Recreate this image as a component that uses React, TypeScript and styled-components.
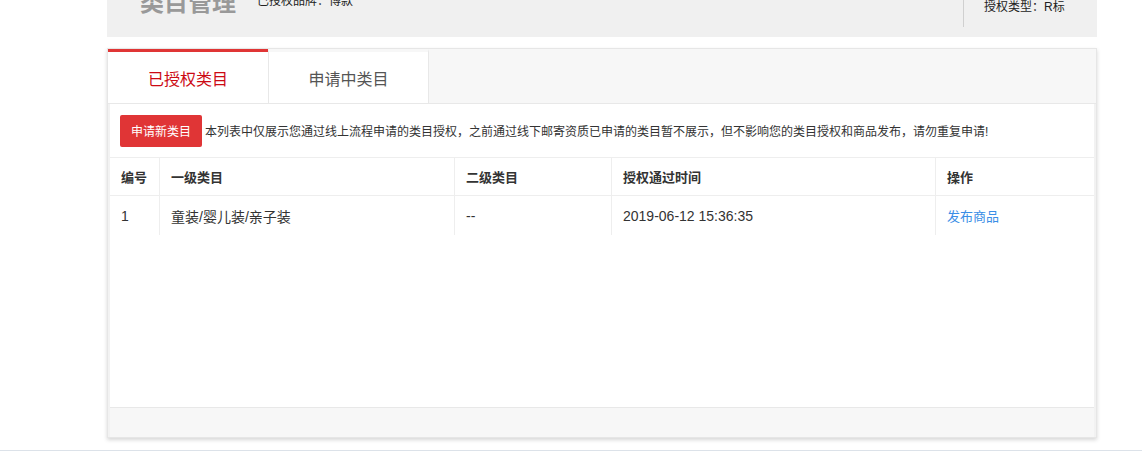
import React from 'react';
import styled, { createGlobalStyle } from 'styled-components';

const GlobalStyle = createGlobalStyle`
  html, body {
    margin: 0;
    padding: 0;
    background: #fff;
    font-family: "Liberation Sans", Arial, "Noto Sans CJK SC", sans-serif;
    color: #333;
  }
`;

const Page = styled.div`
  height: 450px;
  border-bottom: 1px solid #dce2e9;
  overflow: hidden;
`;

const Main = styled.div`
  width: 990px;
  margin-left: 107px;
`;

const Header = styled.div`
  display: flex;
  height: 80px;
  margin-top: -43px;
  padding-left: 33px;
  background: #f0f0f0;
`;

const Title = styled.h1`
  margin: 34px 0 0;
  font-size: 24px;
  line-height: 24px;
  font-weight: bold;
  color: #999;
`;

const BrandInfo = styled.div`
  margin: 38px 0 0 21px;
  font-size: 12px;
  line-height: 12px;
  color: #222;
`;

const TypeBox = styled.div`
  margin-left: auto;
  width: 134px;
  height: 70px;
  border-left: 1px solid #d0d0d0;
  padding-left: 20px;
  box-sizing: border-box;
  font-size: 12px;
  line-height: 12px;
  color: #222;
  padding-top: 44px;
`;

const Card = styled.div`
  margin-top: 11px;
  border: 1px solid #e6e6e6;
  background: #f2f2f2;
  box-shadow: 0 2px 4px rgba(0, 0, 0, 0.16);
`;

const TabBar = styled.div`
  display: flex;
  height: 54px;
  background: #f7f7f7;
  border-bottom: 1px solid #e8e8e8;
`;

const Tab = styled.div<{ $active?: boolean }>`
  width: ${(p) => (p.$active ? '160px' : '161px')};
  display: flex;
  align-items: center;
  justify-content: center;
  background: #fff;
  box-sizing: border-box;
  border-left: ${(p) => (p.$active ? 'none' : '1px solid #e8e8e8')};
  border-top: 3px solid ${(p) => (p.$active ? '#e03535' : '#f7f7f7')};
  border-right: ${(p) => (p.$active ? 'none' : '1px solid #e8e8e8')};
  font-size: 16px;
  color: ${(p) => (p.$active ? '#cc0a14' : '#555')};
  font-family: "Noto Sans CJK SC", sans-serif;
`;

const Body = styled.div`
  margin: 0 2px;
  height: 303px;
  background: #fff;
`;

const Notice = styled.div`
  display: flex;
  align-items: center;
  height: 53px;
  padding-left: 10px;
  border-bottom: 1px solid #eee;
  font-size: 12px;
`;

const ApplyButton = styled.button`
  width: 82px;
  height: 32px;
  margin-right: 3px;
  border: none;
  border-radius: 2px;
  background: #e03536;
  color: #fff;
  font-size: 12px;
  font-family: inherit;
  padding: 0;
`;

const Row = styled.div<{ $head?: boolean }>`
  display: grid;
  grid-template-columns: 49px 295px 157px 324px 1fr;
  height: ${(p) => (p.$head ? '37px' : '39px')};
  border-bottom: ${(p) => (p.$head ? '1px solid #eee' : 'none')};
  font-size: ${(p) => (p.$head ? '13px' : '14px')};
  font-weight: ${(p) => (p.$head ? 'bold' : 'normal')};
`;

const Cell = styled.div`
  display: flex;
  align-items: center;
  padding-left: 11px;
  & + & {
    border-left: 1px solid #eee;
  }
`;

const Link = styled.a`
  font-size: 13px;
  color: #3a8ee6;
  text-decoration: none;
`;

const Footer = styled.div`
  margin: 0 2px;
  height: 29px;
  background: #f7f7f7;
  border-top: 1px solid #e8e8e8;
`;

const rows = [
  { id: '1', first: '童装/婴儿装/亲子装', second: '--', time: '2019-06-12 15:36:35' },
];

export default function App() {
  return (
    <>
      <GlobalStyle />
      <Page>
        <Main>
          <Header>
            <Title>类目管理</Title>
            <BrandInfo>已授权品牌：博款</BrandInfo>
            <TypeBox>授权类型：R标</TypeBox>
          </Header>
          <Card>
            <TabBar>
              <Tab $active>已授权类目</Tab>
              <Tab>申请中类目</Tab>
            </TabBar>
            <Body>
              <Notice>
                <ApplyButton>申请新类目</ApplyButton>
                本列表中仅展示您通过线上流程申请的类目授权，之前通过线下邮寄资质已申请的类目暂不展示，但不影响您的类目授权和商品发布，请勿重复申请!
              </Notice>
              <Row $head>
                <Cell>编号</Cell>
                <Cell>一级类目</Cell>
                <Cell>二级类目</Cell>
                <Cell>授权通过时间</Cell>
                <Cell>操作</Cell>
              </Row>
              {rows.map((r) => (
                <Row key={r.id}>
                  <Cell>{r.id}</Cell>
                  <Cell>{r.first}</Cell>
                  <Cell>{r.second}</Cell>
                  <Cell>{r.time}</Cell>
                  <Cell>
                    <Link href="#">发布商品</Link>
                  </Cell>
                </Row>
              ))}
            </Body>
            <Footer />
          </Card>
        </Main>
      </Page>
    </>
  );
}
